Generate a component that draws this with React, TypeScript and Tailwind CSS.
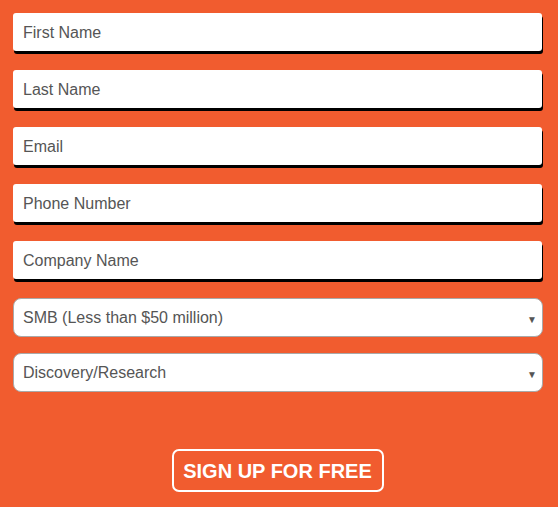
export default function App() {
  const fields = ['First Name', 'Last Name', 'Email', 'Phone Number', 'Company Name'];

  return (
    <div className="w-[558px] h-[507px] bg-[#f15c2f] px-[13px] pt-[13px] font-['Liberation_Sans',Arial,sans-serif]">
      <form className="flex flex-col">
        {fields.map((f) => (
          <input
            key={f}
            type="text"
            placeholder={f}
            className="h-[38px] w-[529px] mb-[19px] rounded-[3px] bg-white px-[10px] pt-[2px] text-[16px] text-[#555] placeholder:text-[#555] shadow-[1px_3px_0_#000] outline-none"
          />
        ))}

        <div className="relative w-[530px]">
          <select className="h-[39px] w-full appearance-none rounded-[8px] border border-[#a9a9a9] bg-white px-[9px] pt-[1px] text-[16px] text-[#555] outline-none">
            <option>SMB (Less than $50 million)</option>
          </select>
          <span className="pointer-events-none absolute right-[6px] top-[14px] text-[10px] text-[#555]">▼</span>
        </div>

        <div className="relative mt-[16px] w-[530px]">
          <select className="h-[39px] w-full appearance-none rounded-[8px] border border-[#a9a9a9] bg-white px-[9px] pt-[1px] text-[16px] text-[#555] outline-none">
            <option>Discovery/Research</option>
          </select>
          <span className="pointer-events-none absolute right-[6px] top-[14px] text-[10px] text-[#555]">▼</span>
        </div>

        <div className="mt-[57px] flex justify-center">
          <button
            type="button"
            className="ml-[-3px] h-[43px] w-[212px] rounded-[7px] border-2 border-white text-[20px] font-bold uppercase text-white"
          >
            Sign up for free
          </button>
        </div>
      </form>
    </div>
  );
}
